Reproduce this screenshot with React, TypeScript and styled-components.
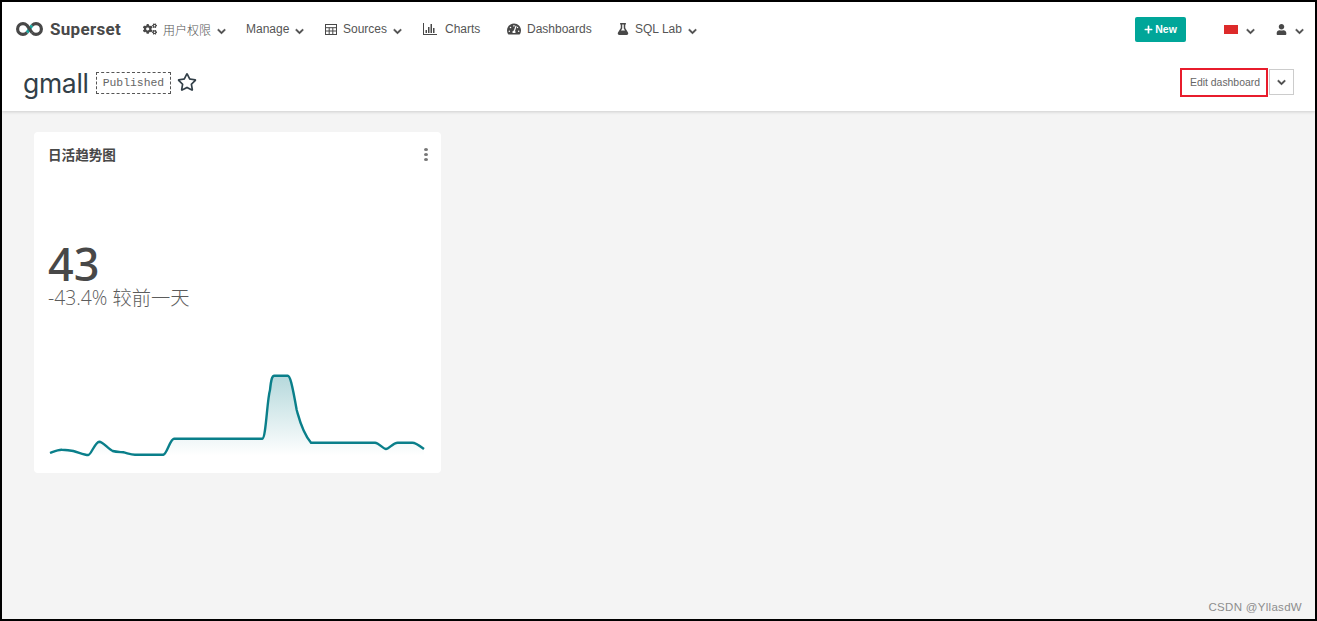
import React from "react";
import styled, { createGlobalStyle } from "styled-components";
import { FaCogs, FaTachometerAlt, FaFlask, FaPlus, FaUser, FaChevronDown, FaRegStar } from "react-icons/fa";

const Global = createGlobalStyle`
  html, body { margin: 0; padding: 0; }
  body { font-family: "Liberation Sans", Arial, sans-serif; background: #f4f4f4; }
`;

const Frame = styled.div`
  position: relative;
  box-sizing: border-box;
  width: 1317px;
  height: 621px;
  border: 2px solid #000;
  background: #f4f4f4;
  overflow: hidden;
  display: flex;
  flex-direction: column;
`;

const TopArea = styled.header`
  background: #fff;
  height: 109px;
  box-shadow: 0 1px 3px rgba(0, 0, 0, 0.16);
  display: flex;
  flex-direction: column;
`;

const Nav = styled.nav`
  height: 54px;
  display: flex;
  align-items: center;
  padding: 0 10px 0 14px;
`;

const Brand = styled.div`
  display: flex;
  align-items: center;
  gap: 7px;
  font: 700 17px Roboto, "Liberation Sans", sans-serif;
  letter-spacing: 0.3px;
  color: #484848;
  width: 127px;
  flex: none;
`;

const NavItem = styled.div<{ $w: number }>`
  display: flex;
  align-items: center;
  flex: none;
  width: ${(p) => p.$w}px;
  font-size: 12px;
  color: #555;
  white-space: nowrap;
  svg { flex: none; color: #484848; }
`;

const NavIcon = styled.span<{ $w?: number }>`
  display: inline-flex;
  width: ${(p) => p.$w ?? 20}px;
  flex: none;
`;

const Caret = styled(FaChevronDown)<{ $bare?: boolean }>`
  margin-left: ${(p) => (p.$bare ? 0 : 6)}px;
  margin-top: ${(p) => (p.$bare ? 0 : 4)}px;
  width: 9px;
  height: 9px;
  stroke: currentColor;
  stroke-width: 30px;
`;

const CjkLabel = styled.span`
  font-family: "Noto Sans CJK SC", sans-serif;
  font-weight: 300;
`;

const NavRight = styled.div`
  margin-left: auto;
  display: flex;
  align-items: center;
`;

const NewButton = styled.div`
  box-sizing: border-box;
  width: 51px;
  height: 25px;
  margin-right: 38px;
  background: #00a699;
  border-radius: 2px;
  color: #fff;
  font-size: 10.5px;
  font-weight: 700;
  display: flex;
  align-items: center;
  justify-content: center;
  gap: 2px;
`;

const Flag = styled.span`
  width: 14px;
  height: 9px;
  background: #dd2a2a;
  display: block;
`;

const RightMenu = styled.div<{ $w: number }>`
  width: ${(p) => p.$w}px;
  display: flex;
  align-items: center;
  color: #484848;
  svg:last-child { margin-left: 8px; margin-top: 4px; }
`;

const TitleRow = styled.div`
  flex: 1;
  display: flex;
  align-items: center;
  padding: 0 21px;
  margin-top: -3px;
`;

const DashTitle = styled.h1`
  margin: 2px 7px 0 0;
  font: 400 26.5px Inter, Roboto, sans-serif;
  letter-spacing: -0.3px;
  color: #323f48;
`;

const Badge = styled.span`
  box-sizing: border-box;
  height: 22px;
  padding: 0 6px;
  margin: 2px 6px 0 0;
  border: 1px dashed #555;
  font: 11.4px "Liberation Mono", monospace;
  color: #666;
  display: flex;
  align-items: center;
`;

const Star = styled(FaRegStar)`
  color: #323f48;
  width: 20px;
  height: 20px;
`;

const Actions = styled.div`
  margin-left: auto;
  display: flex;
  align-items: center;
  gap: 1px;
`;

const EditButton = styled.div`
  box-sizing: border-box;
  width: 88px;
  height: 29px;
  padding-left: 2px;
  border: 2px solid #e81c2c;
  font-size: 10.4px;
  color: #666;
  display: flex;
  align-items: center;
  justify-content: center;
`;

const MoreButton = styled.div`
  box-sizing: border-box;
  width: 25px;
  height: 26px;
  border: 1px solid #ccc;
  color: #444;
  display: flex;
  align-items: center;
  justify-content: center;
`;

const Content = styled.main`
  flex: 1;
  padding: 21px 32px;
`;

const Card = styled.section`
  box-sizing: border-box;
  width: 407px;
  height: 341px;
  background: #fff;
  border-radius: 4px;
  display: flex;
  flex-direction: column;
`;

const CardHeader = styled.div`
  display: flex;
  justify-content: space-between;
  align-items: flex-start;
  padding: 12px 13px 0 14px;
`;

const CardTitle = styled.div`
  font: 700 13.6px "Noto Sans CJK SC", sans-serif;
  color: #484848;
`;

const Kebab = styled.div`
  display: flex;
  flex-direction: column;
  gap: 2px;
  padding-top: 4px;
  span {
    width: 4px;
    height: 3px;
    border-radius: 50%;
    background: #777;
    display: block;
  }
`;

const BigNumber = styled.div`
  margin: 78px 0 0 14px;
  font: 500 45px/44px "Noto Sans", sans-serif;
  color: #484848;
`;

const Sub = styled.div`
  margin: 0 0 0 14px;
  font: 300 19.3px/24px "Open Sans", "Noto Sans CJK SC", sans-serif;
  color: #5c5c5c;
`;

const Spark = styled.svg`
  display: block;
  margin-top: auto;
  width: 407px;
  height: 113px;
`;

const Watermark = styled.div`
  position: absolute;
  right: 13px;
  bottom: 6px;
  font-size: 11.5px;
  letter-spacing: 0.3px;
  color: #8d8d8d;
`;

const Logo = () => (
  <svg width="27" height="14" viewBox="0 0 27 14" fill="none" strokeWidth="3.2">
    <path d="M11 10.6L16 3.4" stroke="#1aa7a0" />
    <path
      d="M16 10.6L11 3.4C9.5 2 8.3 1.6 7 1.6A5.4 5.4 0 0 0 7 12.4C8.3 12.4 9.5 12 11 10.6"
      stroke="#484848"
    />
    <path d="M16 3.4C17.5 2 18.7 1.6 20 1.6A5.4 5.4 0 0 1 20 12.4C18.7 12.4 17.5 12 16 10.6" stroke="#484848" />
  </svg>
);

const TableIcon = () => (
  <svg width="12" height="11" viewBox="0 0 12 11" fill="none" stroke="#484848" strokeWidth="1">
    <rect x="0.5" y="0.5" width="11" height="10" />
    <path d="M0.5 3.7H11.5M0.5 7H11.5M4.2 3.7V10.5M7.8 3.7V10.5" />
  </svg>
);

const ChartsIcon = () => (
  <svg width="14" height="12" viewBox="0 0 14 12" fill="#484848">
    <path d="M0 0h1v11h13v1H0z" />
    <rect x="2.5" y="7" width="1.5" height="3" />
    <rect x="5" y="4" width="1.5" height="6" />
    <rect x="7.5" y="1" width="1.5" height="9" />
    <rect x="10" y="5" width="1.5" height="5" />
  </svg>
);

const line =
  "M16 93 C20 91.5 24 89.5 28 89.7 C32 89.8 35 90 39.3 91 C44 92 50 95 54.3 95 C57 95 61 82 65.3 81.7 C69 81.7 74 89 78.7 91 C82 92 86 92 89.3 92.3 C93 93 97 94.7 101 94.7 L129.3 94.7 C133 94 136 79 140 78.7 L228.3 78.7 C232 78 233 40 236 30 C237 20 238 15.7 240.3 15.7 L253.7 15.7 C256 15.7 258 23 262.7 50 C265 58 268 72 277 82.7 L341 82.7 C345 83 349 89 352 89 C355 89 359 82.7 363.7 82.7 L378.3 82.7 C382 82.7 386 86 390 89";

const App: React.FC = () => (
  <>
    <Global />
    <Frame>
      <TopArea>
        <Nav>
          <Brand>
            <Logo />
            Superset
          </Brand>
          <NavItem $w={103}>
            <NavIcon><FaCogs size={14} /></NavIcon>
            <CjkLabel>用户权限</CjkLabel>
            <Caret />
          </NavItem>
          <NavItem $w={79}>
            Manage
            <Caret />
          </NavItem>
          <NavItem $w={98}>
            <NavIcon $w={18}><TableIcon /></NavIcon>
            Sources
            <Caret />
          </NavItem>
          <NavItem $w={84}>
            <NavIcon $w={22}><ChartsIcon /></NavIcon>
            Charts
          </NavItem>
          <NavItem $w={110}>
            <NavIcon><FaTachometerAlt size={14} /></NavIcon>
            Dashboards
          </NavItem>
          <NavItem $w={90}>
            <NavIcon $w={18}><FaFlask size={12} /></NavIcon>
            SQL Lab
            <Caret />
          </NavItem>
          <NavRight>
            <NewButton>
              <FaPlus size={9} />
              New
            </NewButton>
            <RightMenu $w={52}>
              <Flag />
              <Caret />
            </RightMenu>
            <RightMenu $w={29}>
              <FaUser size={11} />
              <Caret />
            </RightMenu>
          </NavRight>
        </Nav>
        <TitleRow>
          <DashTitle>gmall</DashTitle>
          <Badge>Published</Badge>
          <Star />
          <Actions>
            <EditButton>Edit dashboard</EditButton>
            <MoreButton><Caret $bare /></MoreButton>
          </Actions>
        </TitleRow>
      </TopArea>
      <Content>
        <Card>
          <CardHeader>
            <CardTitle>日活趋势图</CardTitle>
            <Kebab><span /><span /><span /></Kebab>
          </CardHeader>
          <BigNumber>43</BigNumber>
          <Sub>-43.4% 较前一天</Sub>
          <Spark viewBox="0 0 407 113">
            <defs>
              <linearGradient id="sparkFill" x1="0" y1="0" x2="0" y2="1">
                <stop offset="0" stopColor="#0a7f8a" stopOpacity="0.3" />
                <stop offset="1" stopColor="#0a7f8a" stopOpacity="0" />
              </linearGradient>
            </defs>
            <path d={`${line} L390 96 L16 96 Z`} fill="url(#sparkFill)" />
            <path d={line} fill="none" stroke="#0a7f8a" strokeWidth="2.4" />
          </Spark>
        </Card>
      </Content>
      <Watermark>CSDN @YllasdW</Watermark>
    </Frame>
  </>
);

export default App;
